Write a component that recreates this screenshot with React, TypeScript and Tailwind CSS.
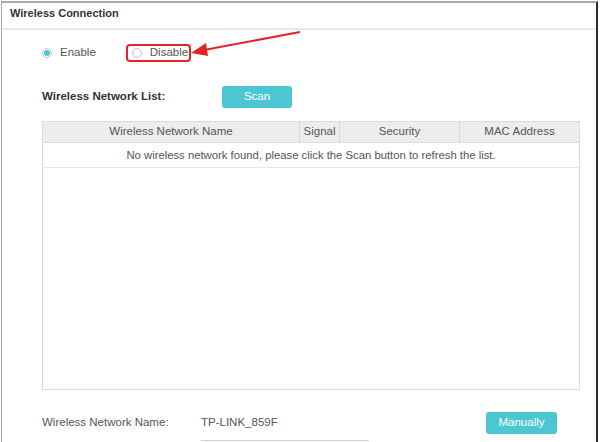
import React from 'react';

const Radio: React.FC<{ checked?: boolean; label: string }> = ({ checked, label }) => (
  <label className="flex items-center gap-[8px]">
    <span className="w-[10px] h-[10px] rounded-full border border-[#c4c4c4] bg-white flex items-center justify-center">
      {checked && <span className="w-[6px] h-[6px] rounded-full bg-[#4cc6d2]" />}
    </span>
    <span>{label}</span>
  </label>
);

const App: React.FC = () => {
  return (
    <div className="w-[600px] h-[442px] bg-white overflow-hidden relative font-['Liberation_Sans',Arial,sans-serif] text-[#555] text-[11px]">
      <div className="ml-[1px] mt-[1px] w-[597px] h-[441px] border-l border-t-2 border-l-[#a8a8a8] border-t-[#a8a8a8] border-r-2 border-r-[#2a2a2a]">
        <div className="h-[27px] px-[8px] pt-[2px] font-bold text-[11px] text-[#333] border-b-2 border-[#e8e8e8]">
          Wireless Connection
        </div>

        <div className="pl-[40px] pr-[18px]">
          <div className="h-[45px] flex items-center text-[11.5px]">
            <Radio checked label="Enable" />
            <div className="ml-[30px] pl-[4px] pr-[1px] h-[18px] flex items-center rounded-[4px] border-2 border-[#e2242b]">
              <Radio label="Disable" />
            </div>
          </div>

          <div className="mt-[11px] flex items-center h-[22px]">
            <span className="w-[180px] font-bold text-[#333] text-[11.5px]">Wireless Network List:</span>
            <button className="w-[70px] h-[22px] rounded-[3px] bg-[#4cc6d2] text-white text-[11.5px]">Scan</button>
          </div>

          <div className="mt-[13px] w-[538px] h-[269px] border border-[#dcdcdc] flex flex-col">
            <div className="grid grid-cols-[257px_40px_120px_1fr] h-[21px] bg-[#ededed] border-b border-[#dcdcdc] text-[11.5px]">
              <div className="flex items-center justify-center border-r border-[#d8d8d8]">Wireless Network Name</div>
              <div className="flex items-center justify-center border-r border-[#d8d8d8]">Signal</div>
              <div className="flex items-center justify-center border-r border-[#d8d8d8]">Security</div>
              <div className="flex items-center justify-center">MAC Address</div>
            </div>
            <div className="h-[25px] flex items-center justify-center border-b border-[#e6e6e6] text-[11.3px]">
              No wireless network found, please click the Scan button to refresh the list.
            </div>
            <div className="flex-1" />
          </div>

          <div className="mt-[22px] flex items-center h-[22px] text-[11.5px]">
            <span className="w-[159px]">Wireless Network Name:</span>
            <span className="w-[285px]">TP-LINK_859F</span>
            <button className="w-[71px] h-[22px] rounded-[3px] bg-[#4cc6d2] text-white">Manually</button>
          </div>
          <div className="ml-[159px] mt-[6px] w-[168px] border-t border-[#cfcfcf]" />
        </div>
      </div>

      <svg className="absolute left-0 top-0 pointer-events-none" width="600" height="442">
        <line x1="300" y1="32" x2="204" y2="50" stroke="#e2242b" strokeWidth="2" />
        <polygon points="191,53 206,43 208,56" fill="#e2242b" />
      </svg>
    </div>
  );
};

export default App;
